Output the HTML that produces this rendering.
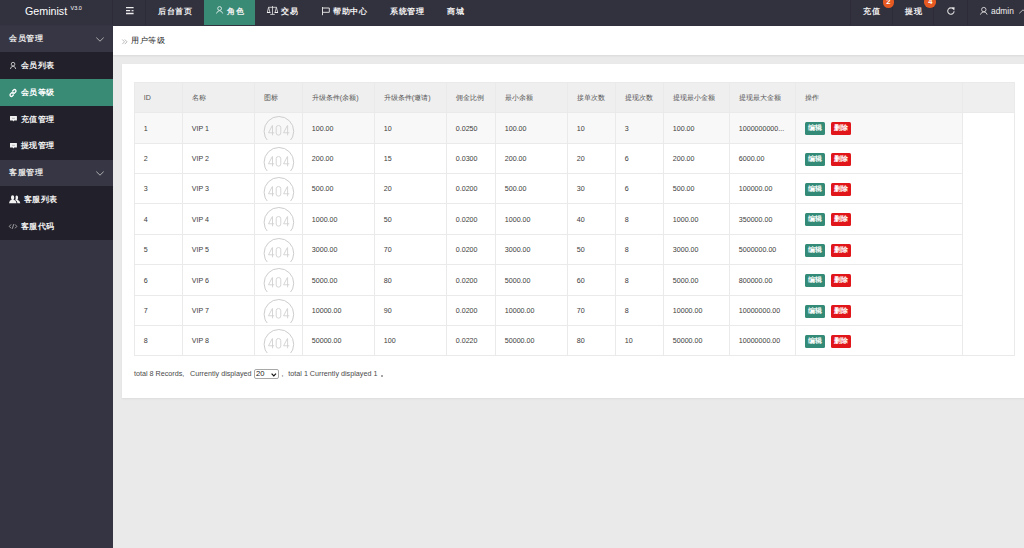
<!DOCTYPE html>
<html><head><meta charset="utf-8">
<style>
*{margin:0;padding:0;box-sizing:border-box}
html,body{width:1024px;height:548px;overflow:hidden;background:#eaeaea;font-family:"Liberation Sans",sans-serif;}
.abs{position:absolute}
svg{display:block;overflow:visible}
#hdr{position:absolute;left:0;top:0;width:1024px;height:25.5px;background:#32313e;color:#fff}
.t{position:absolute;white-space:nowrap;color:#f2f2f2;font-size:8px;font-weight:600;line-height:10px;letter-spacing:0.5px}
.sep{position:absolute;top:0;width:1px;height:25px;background:#2c2b37}
#logo{position:absolute;left:25px;top:3.6px;line-height:14px;font-size:10.7px;color:#fff;white-space:nowrap}
#logo span{font-size:5.5px;position:absolute;left:45.5px;top:-2.6px;}
.badge{position:absolute;top:-3.8px;width:11.7px;height:11.7px;border-radius:50%;background:#e65a22;color:#fff;font-size:7.5px;text-align:center;line-height:12.4px;font-weight:bold}
#side{position:absolute;left:0;top:25px;width:113px;height:523px;background:#353443}
.grp{position:absolute;left:0;width:113px;height:26.75px;background:#373645}
.itm{position:absolute;left:0;width:113px;height:26.75px;background:#22212b}
.on{background:#3a8b76}
#bc{position:absolute;left:113px;top:25.6px;width:911px;height:29.6px;background:#fff;box-shadow:0 1px 2px rgba(0,0,0,.08)}
#card{position:absolute;left:122px;top:64px;width:910px;height:334px;background:#fff;box-shadow:0 1px 2px rgba(0,0,0,.06)}
.cell{position:absolute;font-size:7.1px;color:#3c3c3c;white-space:nowrap}
.th{color:#555}
.hl{position:absolute;height:1px;background:#eaeaea}
.vl{position:absolute;width:1px;background:#eaeaea}
.btn{position:absolute;width:20.3px;height:12.9px;border-radius:1.5px;color:#fff;font-size:7px;line-height:12.9px;text-align:center;font-weight:600;letter-spacing:0.2px}
.ft{position:absolute;top:369px;font-size:7.2px;color:#4a4a4a;line-height:10px;white-space:nowrap}
</style></head>
<body>
<div id="hdr">
  <div id="logo">Geminist<span>V3.0</span></div>
  <div class="sep" style="left:112px"></div>
  <div class="sep" style="left:145px"></div>
  <svg class="abs" style="left:126px;top:7px" width="8" height="8" viewBox="0 0 8 8"><g stroke="#eee" stroke-width="1.3"><path d="M0 0.7H7.6M0 3.6H4.2M0 6.5H7.6"/></g><rect x="5.6" y="3" width="1.9" height="1.3" fill="#ddd"/></svg>
  <div class="t" style="left:158px;top:6.5px">后台首页</div>
  <div class="abs" style="left:204px;top:0;width:51px;height:25px;background:#3a8b76"></div>
  <svg class="abs" style="left:216.3px;top:6.2px" width="8" height="8" viewBox="0 0 8 8"><g fill="none" stroke="#e8f2ef" stroke-width="0.85"><circle cx="3.6" cy="2.5" r="1.9"/><path d="M0.5 7.5 Q1.2 4.9 3.6 4.7 Q6 4.9 6.7 7.5"/></g></svg>
  <div class="t" style="left:227px;top:6.5px">角色</div>
  <svg class="abs" style="left:266.8px;top:6px" width="11" height="9" viewBox="0 0 11 9"><g fill="none" stroke="#e4e4e4" stroke-width="0.8"><path d="M5.5 0V8.4M1.4 1.3H9.6M3.2 8.4H7.8M1.6 1.3L0.3 6.3M1.6 1.3L2.9 6.3M9.4 1.3L8.1 6.3M9.4 1.3L10.7 6.3"/></g><path d="M0 6H3.4V6.9H0ZM7.6 6H11V6.9H7.6Z" fill="#f4f4f4"/></svg>
  <div class="t" style="left:281px;top:6.5px">交易</div>
  <svg class="abs" style="left:322px;top:6.5px" width="9" height="9" viewBox="0 0 9 9"><g fill="none" stroke="#ddd" stroke-width="1"><path d="M0.5 0V8.2"/><path d="M0.5 1H7.3V5.3H0.5"/></g></svg>
  <div class="t" style="left:333px;top:6.5px">帮助中心</div>
  <div class="t" style="left:390px;top:6.5px">系统管理</div>
  <div class="t" style="left:447px;top:6.5px">商城</div>
  <div class="sep" style="left:850px"></div>
  <div class="sep" style="left:892px"></div>
  <div class="sep" style="left:933px"></div>
  <div class="sep" style="left:967px"></div>
  <div class="t" style="left:863px;top:6.5px">充值</div>
  <div class="badge" style="left:882.5px">2</div>
  <div class="t" style="left:905px;top:6.5px">提现</div>
  <div class="badge" style="left:924.4px">4</div>
  <svg class="abs" style="left:946.5px;top:7px" width="8" height="8" viewBox="0 0 8 8"><path d="M6.6 2.3A3.2 3.2 0 1 0 7.1 4.3" fill="none" stroke="#ddd" stroke-width="1.1"/><path d="M4.6 0.6L7.6 0.3L7.3 3.4Z" fill="#eee"/></svg>
  <svg class="abs" style="left:980px;top:6.5px" width="8" height="8" viewBox="0 0 8 8"><g fill="none" stroke="#ddd" stroke-width="0.9"><circle cx="3.8" cy="2.6" r="2.2"/><path d="M0.4 7.6 Q1.4 4.8 3.8 4.9 Q6.2 4.8 7.2 7.6"/></g></svg>
  <div class="t" style="left:991px;top:6px;font-size:8.4px;font-weight:normal;letter-spacing:0">admin</div>
  <svg class="abs" style="left:1018.5px;top:8.5px" width="8" height="5" viewBox="0 0 8 5"><path d="M0.3 4.3L4 0.8L7.7 4.3" fill="none" stroke="#ccc" stroke-width="0.9"/></svg>
</div>

<div id="side">
  <div class="grp" style="top:0.5px;height:26.5px"></div>
  <div class="itm" style="top:27px;height:27px"></div>
  <div class="itm on" style="top:54px;height:27px"></div>
  <div class="itm" style="top:81px;height:27px"></div>
  <div class="itm" style="top:108px;height:27px"></div>
  <div class="grp" style="top:135px;height:26px"></div>
  <div class="itm" style="top:161px;height:27px"></div>
  <div class="itm" style="top:188px;height:27px"></div>
</div>
<div class="t" style="left:9px;top:33.5px;color:#e6e6e6">会员管理</div>
<svg class="abs" style="left:96px;top:37px" width="8" height="5" viewBox="0 0 8 5"><path d="M0.3 0.6L4 4.2L7.7 0.6" fill="none" stroke="#bbb" stroke-width="0.9"/></svg>
<svg class="abs" style="left:10.2px;top:61.5px" width="6.3" height="7.2" viewBox="0 0 7 8"><g fill="none" stroke="#ddd" stroke-width="0.9"><circle cx="3.4" cy="2.4" r="2"/><path d="M0.4 7.8 Q1.2 4.6 3.4 4.7 Q5.6 4.6 6.4 7.8"/></g></svg>
<div class="t" style="left:20.5px;top:60.5px">会员列表</div>
<svg class="abs" style="left:9px;top:88.5px" width="8" height="8" viewBox="0 0 8 8"><g fill="none" stroke="#fff" stroke-width="1.25"><path d="M3.2 2.4L4.6 1Q5.6 0 6.6 1Q7.6 2 6.6 3L5.2 4.4Q4.2 5.4 3.2 4.4"/><path d="M4.8 5.6L3.4 7Q2.4 8 1.4 7Q0.4 6 1.4 5L2.8 3.6Q3.8 2.6 4.8 3.6"/></g></svg>
<div class="t" style="left:20.5px;top:87.5px;color:#fff">会员等级</div>
<svg class="abs" style="left:9.5px;top:116.2px" width="7.2" height="6.3" viewBox="0 0 8 7"><path d="M0.3 0H7.4Q7.7 0 7.7 0.3V4.8Q7.7 5.1 7.4 5.1H4.6L3.8 6.2L3 5.1H0.3Q0 5.1 0 4.8V0.3Q0 0 0.3 0Z" fill="#f0f0f0"/><path d="M2.2 2.6H5.5" stroke="#888" stroke-width="0.6"/></svg>
<div class="t" style="left:20.5px;top:114.5px">充值管理</div>
<svg class="abs" style="left:9.5px;top:143.2px" width="7.2" height="6.3" viewBox="0 0 8 7"><path d="M0.3 0H7.4Q7.7 0 7.7 0.3V4.8Q7.7 5.1 7.4 5.1H4.6L3.8 6.2L3 5.1H0.3Q0 5.1 0 4.8V0.3Q0 0 0.3 0Z" fill="#f0f0f0"/><path d="M2.2 2.6H5.5" stroke="#888" stroke-width="0.6"/></svg>
<div class="t" style="left:20.5px;top:141px">提现管理</div>
<div class="t" style="left:9px;top:168px;color:#e6e6e6">客服管理</div>
<svg class="abs" style="left:96px;top:171px" width="8" height="5" viewBox="0 0 8 5"><path d="M0.3 0.6L4 4.2L7.7 0.6" fill="none" stroke="#bbb" stroke-width="0.9"/></svg>
<svg class="abs" style="left:9.2px;top:195px" width="12" height="9" viewBox="0 0 12 9"><path d="M3.6 0.2Q5.2 0.2 5.2 2.2Q5.2 3.8 4.4 4.6Q7.2 5.4 7.6 8.3H0Q0.3 5.4 2.8 4.6Q2 3.8 2 2.2Q2 0.2 3.6 0.2Z" fill="#f2f2f2"/><path d="M7.6 0.6Q9.1 0.6 9.1 2.5Q9.1 3.9 8.4 4.7Q11 5.4 11.3 8.3H8.5Q8.2 5.8 6.2 4.9Q6.9 3.9 6.6 1.2Q7 0.6 7.6 0.6Z" fill="#f2f2f2"/></svg>
<div class="t" style="left:23.7px;top:195px">客服列表</div>
<svg class="abs" style="left:8.8px;top:223.7px" width="8.3" height="5.5" viewBox="0 0 9 6"><g fill="none" stroke="#ccc" stroke-width="0.8"><path d="M2.2 0.5L0.3 2.6L2.2 4.7M6.6 0.5L8.5 2.6L6.6 4.7M5.1 0.2L3.6 5.2"/></g></svg>
<div class="t" style="left:20.5px;top:221.5px">客服代码</div>

<div id="bc">
  <svg class="abs" style="left:9px;top:13px" width="6" height="6" viewBox="0 0 6 6"><g fill="none" stroke="#aaa" stroke-width="0.8"><path d="M0.3 0.5L2.5 2.8L0.3 5.1M2.8 0.5L5 2.8L2.8 5.1"/></g></svg>
  <div class="t" style="left:18px;top:10.7px;color:#222;font-weight:400">用户等级</div>
</div>

<div id="card"></div>
<div class="abs" style="left:134px;top:82px;width:881px;height:30px;background:#efefef"></div>
<div class="abs" style="left:134px;top:112px;width:828px;height:31px;background:#f8f8f8"></div>
<div class="cell th" style="left:143.8px;top:82.8px;line-height:30px">ID</div>
<div class="cell th" style="left:191.8px;top:82.8px;line-height:30px">名称</div>
<div class="cell th" style="left:263.8px;top:82.8px;line-height:30px">图标</div>
<div class="cell th" style="left:311.8px;top:82.8px;line-height:30px">升级条件(余额)</div>
<div class="cell th" style="left:383.8px;top:82.8px;line-height:30px">升级条件(邀请)</div>
<div class="cell th" style="left:455.8px;top:82.8px;line-height:30px">佣金比例</div>
<div class="cell th" style="left:504.8px;top:82.8px;line-height:30px">最小余额</div>
<div class="cell th" style="left:576.8px;top:82.8px;line-height:30px">接单次数</div>
<div class="cell th" style="left:624.8px;top:82.8px;line-height:30px">提现次数</div>
<div class="cell th" style="left:672.8px;top:82.8px;line-height:30px">提现最小金额</div>
<div class="cell th" style="left:738.8px;top:82.8px;line-height:30px">提现最大金额</div>
<div class="cell th" style="left:804.8px;top:82.8px;line-height:30px">操作</div>
<div class="cell" style="left:143.8px;top:113px;line-height:30px;margin-top:0.5px">1</div>
<div class="cell" style="left:191.8px;top:113px;line-height:30px;margin-top:0.5px">VIP 1</div>
<div class="cell" style="left:311.8px;top:113px;line-height:30px;margin-top:0.5px">100.00</div>
<div class="cell" style="left:383.8px;top:113px;line-height:30px;margin-top:0.5px">10</div>
<div class="cell" style="left:455.8px;top:113px;line-height:30px;margin-top:0.5px">0.0250</div>
<div class="cell" style="left:504.8px;top:113px;line-height:30px;margin-top:0.5px">100.00</div>
<div class="cell" style="left:576.8px;top:113px;line-height:30px;margin-top:0.5px">10</div>
<div class="cell" style="left:624.8px;top:113px;line-height:30px;margin-top:0.5px">3</div>
<div class="cell" style="left:672.8px;top:113px;line-height:30px;margin-top:0.5px">100.00</div>
<div class="cell" style="left:738.8px;top:113px;line-height:30px;margin-top:0.5px">1000000000...</div>
<div class="abs" style="left:263px;top:115.8px"><svg width="32" height="24" viewBox="0 0 32 24" style="overflow:hidden"><circle cx="15.9" cy="15.3" r="14.8" fill="none" stroke="#cdcdcd" stroke-width="1"/><g fill="none" stroke="#d0d0d0" stroke-width="0.9"><path d="M9.3 9.5 L5.5 16.8 L11.2 16.8 M9.5 9.5 V19.3"/><rect x="13.2" y="9.5" width="4.6" height="9.6" rx="2.2"/><path d="M24.4 9.5 L20.6 16.8 L26.3 16.8 M24.6 9.5 V19.3"/></g></svg></div>
<div class="btn" style="left:804.9px;top:122.2px;background:#338a76">编辑</div>
<div class="btn" style="left:831px;top:122.2px;background:#e0161b">删除</div>
<div class="cell" style="left:143.8px;top:144px;line-height:29px;margin-top:0.5px">2</div>
<div class="cell" style="left:191.8px;top:144px;line-height:29px;margin-top:0.5px">VIP 2</div>
<div class="cell" style="left:311.8px;top:144px;line-height:29px;margin-top:0.5px">200.00</div>
<div class="cell" style="left:383.8px;top:144px;line-height:29px;margin-top:0.5px">15</div>
<div class="cell" style="left:455.8px;top:144px;line-height:29px;margin-top:0.5px">0.0300</div>
<div class="cell" style="left:504.8px;top:144px;line-height:29px;margin-top:0.5px">200.00</div>
<div class="cell" style="left:576.8px;top:144px;line-height:29px;margin-top:0.5px">20</div>
<div class="cell" style="left:624.8px;top:144px;line-height:29px;margin-top:0.5px">6</div>
<div class="cell" style="left:672.8px;top:144px;line-height:29px;margin-top:0.5px">200.00</div>
<div class="cell" style="left:738.8px;top:144px;line-height:29px;margin-top:0.5px">6000.00</div>
<div class="abs" style="left:263px;top:146.8px"><svg width="32" height="24" viewBox="0 0 32 24" style="overflow:hidden"><circle cx="15.9" cy="15.3" r="14.8" fill="none" stroke="#cdcdcd" stroke-width="1"/><g fill="none" stroke="#d0d0d0" stroke-width="0.9"><path d="M9.3 9.5 L5.5 16.8 L11.2 16.8 M9.5 9.5 V19.3"/><rect x="13.2" y="9.5" width="4.6" height="9.6" rx="2.2"/><path d="M24.4 9.5 L20.6 16.8 L26.3 16.8 M24.6 9.5 V19.3"/></g></svg></div>
<div class="btn" style="left:804.9px;top:152.7px;background:#338a76">编辑</div>
<div class="btn" style="left:831px;top:152.7px;background:#e0161b">删除</div>
<div class="cell" style="left:143.8px;top:174px;line-height:29px;margin-top:0.5px">3</div>
<div class="cell" style="left:191.8px;top:174px;line-height:29px;margin-top:0.5px">VIP 3</div>
<div class="cell" style="left:311.8px;top:174px;line-height:29px;margin-top:0.5px">500.00</div>
<div class="cell" style="left:383.8px;top:174px;line-height:29px;margin-top:0.5px">20</div>
<div class="cell" style="left:455.8px;top:174px;line-height:29px;margin-top:0.5px">0.0200</div>
<div class="cell" style="left:504.8px;top:174px;line-height:29px;margin-top:0.5px">500.00</div>
<div class="cell" style="left:576.8px;top:174px;line-height:29px;margin-top:0.5px">30</div>
<div class="cell" style="left:624.8px;top:174px;line-height:29px;margin-top:0.5px">6</div>
<div class="cell" style="left:672.8px;top:174px;line-height:29px;margin-top:0.5px">500.00</div>
<div class="cell" style="left:738.8px;top:174px;line-height:29px;margin-top:0.5px">100000.00</div>
<div class="abs" style="left:263px;top:176.8px"><svg width="32" height="24" viewBox="0 0 32 24" style="overflow:hidden"><circle cx="15.9" cy="15.3" r="14.8" fill="none" stroke="#cdcdcd" stroke-width="1"/><g fill="none" stroke="#d0d0d0" stroke-width="0.9"><path d="M9.3 9.5 L5.5 16.8 L11.2 16.8 M9.5 9.5 V19.3"/><rect x="13.2" y="9.5" width="4.6" height="9.6" rx="2.2"/><path d="M24.4 9.5 L20.6 16.8 L26.3 16.8 M24.6 9.5 V19.3"/></g></svg></div>
<div class="btn" style="left:804.9px;top:182.7px;background:#338a76">编辑</div>
<div class="btn" style="left:831px;top:182.7px;background:#e0161b">删除</div>
<div class="cell" style="left:143.8px;top:204px;line-height:30px;margin-top:0.5px">4</div>
<div class="cell" style="left:191.8px;top:204px;line-height:30px;margin-top:0.5px">VIP 4</div>
<div class="cell" style="left:311.8px;top:204px;line-height:30px;margin-top:0.5px">1000.00</div>
<div class="cell" style="left:383.8px;top:204px;line-height:30px;margin-top:0.5px">50</div>
<div class="cell" style="left:455.8px;top:204px;line-height:30px;margin-top:0.5px">0.0200</div>
<div class="cell" style="left:504.8px;top:204px;line-height:30px;margin-top:0.5px">1000.00</div>
<div class="cell" style="left:576.8px;top:204px;line-height:30px;margin-top:0.5px">40</div>
<div class="cell" style="left:624.8px;top:204px;line-height:30px;margin-top:0.5px">8</div>
<div class="cell" style="left:672.8px;top:204px;line-height:30px;margin-top:0.5px">1000.00</div>
<div class="cell" style="left:738.8px;top:204px;line-height:30px;margin-top:0.5px">350000.00</div>
<div class="abs" style="left:263px;top:206.8px"><svg width="32" height="24" viewBox="0 0 32 24" style="overflow:hidden"><circle cx="15.9" cy="15.3" r="14.8" fill="none" stroke="#cdcdcd" stroke-width="1"/><g fill="none" stroke="#d0d0d0" stroke-width="0.9"><path d="M9.3 9.5 L5.5 16.8 L11.2 16.8 M9.5 9.5 V19.3"/><rect x="13.2" y="9.5" width="4.6" height="9.6" rx="2.2"/><path d="M24.4 9.5 L20.6 16.8 L26.3 16.8 M24.6 9.5 V19.3"/></g></svg></div>
<div class="btn" style="left:804.9px;top:213.2px;background:#338a76">编辑</div>
<div class="btn" style="left:831px;top:213.2px;background:#e0161b">删除</div>
<div class="cell" style="left:143.8px;top:235px;line-height:29px;margin-top:0.5px">5</div>
<div class="cell" style="left:191.8px;top:235px;line-height:29px;margin-top:0.5px">VIP 5</div>
<div class="cell" style="left:311.8px;top:235px;line-height:29px;margin-top:0.5px">3000.00</div>
<div class="cell" style="left:383.8px;top:235px;line-height:29px;margin-top:0.5px">70</div>
<div class="cell" style="left:455.8px;top:235px;line-height:29px;margin-top:0.5px">0.0200</div>
<div class="cell" style="left:504.8px;top:235px;line-height:29px;margin-top:0.5px">3000.00</div>
<div class="cell" style="left:576.8px;top:235px;line-height:29px;margin-top:0.5px">50</div>
<div class="cell" style="left:624.8px;top:235px;line-height:29px;margin-top:0.5px">8</div>
<div class="cell" style="left:672.8px;top:235px;line-height:29px;margin-top:0.5px">3000.00</div>
<div class="cell" style="left:738.8px;top:235px;line-height:29px;margin-top:0.5px">5000000.00</div>
<div class="abs" style="left:263px;top:237.8px"><svg width="32" height="24" viewBox="0 0 32 24" style="overflow:hidden"><circle cx="15.9" cy="15.3" r="14.8" fill="none" stroke="#cdcdcd" stroke-width="1"/><g fill="none" stroke="#d0d0d0" stroke-width="0.9"><path d="M9.3 9.5 L5.5 16.8 L11.2 16.8 M9.5 9.5 V19.3"/><rect x="13.2" y="9.5" width="4.6" height="9.6" rx="2.2"/><path d="M24.4 9.5 L20.6 16.8 L26.3 16.8 M24.6 9.5 V19.3"/></g></svg></div>
<div class="btn" style="left:804.9px;top:243.7px;background:#338a76">编辑</div>
<div class="btn" style="left:831px;top:243.7px;background:#e0161b">删除</div>
<div class="cell" style="left:143.8px;top:265px;line-height:30px;margin-top:0.5px">6</div>
<div class="cell" style="left:191.8px;top:265px;line-height:30px;margin-top:0.5px">VIP 6</div>
<div class="cell" style="left:311.8px;top:265px;line-height:30px;margin-top:0.5px">5000.00</div>
<div class="cell" style="left:383.8px;top:265px;line-height:30px;margin-top:0.5px">80</div>
<div class="cell" style="left:455.8px;top:265px;line-height:30px;margin-top:0.5px">0.0200</div>
<div class="cell" style="left:504.8px;top:265px;line-height:30px;margin-top:0.5px">5000.00</div>
<div class="cell" style="left:576.8px;top:265px;line-height:30px;margin-top:0.5px">60</div>
<div class="cell" style="left:624.8px;top:265px;line-height:30px;margin-top:0.5px">8</div>
<div class="cell" style="left:672.8px;top:265px;line-height:30px;margin-top:0.5px">5000.00</div>
<div class="cell" style="left:738.8px;top:265px;line-height:30px;margin-top:0.5px">800000.00</div>
<div class="abs" style="left:263px;top:267.8px"><svg width="32" height="24" viewBox="0 0 32 24" style="overflow:hidden"><circle cx="15.9" cy="15.3" r="14.8" fill="none" stroke="#cdcdcd" stroke-width="1"/><g fill="none" stroke="#d0d0d0" stroke-width="0.9"><path d="M9.3 9.5 L5.5 16.8 L11.2 16.8 M9.5 9.5 V19.3"/><rect x="13.2" y="9.5" width="4.6" height="9.6" rx="2.2"/><path d="M24.4 9.5 L20.6 16.8 L26.3 16.8 M24.6 9.5 V19.3"/></g></svg></div>
<div class="btn" style="left:804.9px;top:274.2px;background:#338a76">编辑</div>
<div class="btn" style="left:831px;top:274.2px;background:#e0161b">删除</div>
<div class="cell" style="left:143.8px;top:296px;line-height:29px;margin-top:0.5px">7</div>
<div class="cell" style="left:191.8px;top:296px;line-height:29px;margin-top:0.5px">VIP 7</div>
<div class="cell" style="left:311.8px;top:296px;line-height:29px;margin-top:0.5px">10000.00</div>
<div class="cell" style="left:383.8px;top:296px;line-height:29px;margin-top:0.5px">90</div>
<div class="cell" style="left:455.8px;top:296px;line-height:29px;margin-top:0.5px">0.0200</div>
<div class="cell" style="left:504.8px;top:296px;line-height:29px;margin-top:0.5px">10000.00</div>
<div class="cell" style="left:576.8px;top:296px;line-height:29px;margin-top:0.5px">70</div>
<div class="cell" style="left:624.8px;top:296px;line-height:29px;margin-top:0.5px">8</div>
<div class="cell" style="left:672.8px;top:296px;line-height:29px;margin-top:0.5px">10000.00</div>
<div class="cell" style="left:738.8px;top:296px;line-height:29px;margin-top:0.5px">10000000.00</div>
<div class="abs" style="left:263px;top:298.8px"><svg width="32" height="24" viewBox="0 0 32 24" style="overflow:hidden"><circle cx="15.9" cy="15.3" r="14.8" fill="none" stroke="#cdcdcd" stroke-width="1"/><g fill="none" stroke="#d0d0d0" stroke-width="0.9"><path d="M9.3 9.5 L5.5 16.8 L11.2 16.8 M9.5 9.5 V19.3"/><rect x="13.2" y="9.5" width="4.6" height="9.6" rx="2.2"/><path d="M24.4 9.5 L20.6 16.8 L26.3 16.8 M24.6 9.5 V19.3"/></g></svg></div>
<div class="btn" style="left:804.9px;top:304.7px;background:#338a76">编辑</div>
<div class="btn" style="left:831px;top:304.7px;background:#e0161b">删除</div>
<div class="cell" style="left:143.8px;top:326px;line-height:29px;margin-top:0.5px">8</div>
<div class="cell" style="left:191.8px;top:326px;line-height:29px;margin-top:0.5px">VIP 8</div>
<div class="cell" style="left:311.8px;top:326px;line-height:29px;margin-top:0.5px">50000.00</div>
<div class="cell" style="left:383.8px;top:326px;line-height:29px;margin-top:0.5px">100</div>
<div class="cell" style="left:455.8px;top:326px;line-height:29px;margin-top:0.5px">0.0220</div>
<div class="cell" style="left:504.8px;top:326px;line-height:29px;margin-top:0.5px">50000.00</div>
<div class="cell" style="left:576.8px;top:326px;line-height:29px;margin-top:0.5px">80</div>
<div class="cell" style="left:624.8px;top:326px;line-height:29px;margin-top:0.5px">10</div>
<div class="cell" style="left:672.8px;top:326px;line-height:29px;margin-top:0.5px">50000.00</div>
<div class="cell" style="left:738.8px;top:326px;line-height:29px;margin-top:0.5px">10000000.00</div>
<div class="abs" style="left:263px;top:328.8px"><svg width="32" height="24" viewBox="0 0 32 24" style="overflow:hidden"><circle cx="15.9" cy="15.3" r="14.8" fill="none" stroke="#cdcdcd" stroke-width="1"/><g fill="none" stroke="#d0d0d0" stroke-width="0.9"><path d="M9.3 9.5 L5.5 16.8 L11.2 16.8 M9.5 9.5 V19.3"/><rect x="13.2" y="9.5" width="4.6" height="9.6" rx="2.2"/><path d="M24.4 9.5 L20.6 16.8 L26.3 16.8 M24.6 9.5 V19.3"/></g></svg></div>
<div class="btn" style="left:804.9px;top:334.7px;background:#338a76">编辑</div>
<div class="btn" style="left:831px;top:334.7px;background:#e0161b">删除</div>
<div class="hl" style="left:134px;top:82px;width:881px"></div>
<div class="hl" style="left:134px;top:112px;width:881px"></div>
<div class="hl" style="left:134px;top:143px;width:828px"></div>
<div class="hl" style="left:134px;top:173px;width:828px"></div>
<div class="hl" style="left:134px;top:203px;width:828px"></div>
<div class="hl" style="left:134px;top:234px;width:828px"></div>
<div class="hl" style="left:134px;top:264px;width:828px"></div>
<div class="hl" style="left:134px;top:295px;width:828px"></div>
<div class="hl" style="left:134px;top:325px;width:828px"></div>
<div class="hl" style="left:134px;top:355px;width:881px"></div>
<div class="vl" style="left:134px;top:82px;height:274px"></div>
<div class="vl" style="left:182px;top:82px;height:274px"></div>
<div class="vl" style="left:254px;top:82px;height:274px"></div>
<div class="vl" style="left:302px;top:82px;height:274px"></div>
<div class="vl" style="left:374px;top:82px;height:274px"></div>
<div class="vl" style="left:446px;top:82px;height:274px"></div>
<div class="vl" style="left:495px;top:82px;height:274px"></div>
<div class="vl" style="left:567px;top:82px;height:274px"></div>
<div class="vl" style="left:615px;top:82px;height:274px"></div>
<div class="vl" style="left:663px;top:82px;height:274px"></div>
<div class="vl" style="left:729px;top:82px;height:274px"></div>
<div class="vl" style="left:795px;top:82px;height:274px"></div>
<div class="vl" style="left:962px;top:82px;height:274px"></div>
<div class="vl" style="left:1014px;top:82px;height:274px"></div>

<div class="ft" style="left:134px">total 8 Records,</div>
<div class="ft" style="left:190px">Currently displayed</div>
<div class="abs" style="left:253.5px;top:368.5px;width:25.3px;height:10.8px;border:1px solid #a8a8a8;border-radius:2px;background:#fff"></div>
<div class="ft" style="left:256px;font-size:7.6px;color:#1a1a1a">20</div>
<svg class="abs" style="left:271.3px;top:372.5px" width="6" height="4" viewBox="0 0 6 4"><path d="M0.6 0.6L2.8 2.8L5 0.6" fill="none" stroke="#111" stroke-width="1.2"/></svg>
<div class="ft" style="left:281.5px">,</div>
<div class="ft" style="left:288.3px">total 1 Currently displayed 1</div>
<div class="abs" style="left:380.6px;top:375px;width:2.2px;height:2.2px;border-radius:50%;border:0.7px solid #666"></div>
</body></html>
